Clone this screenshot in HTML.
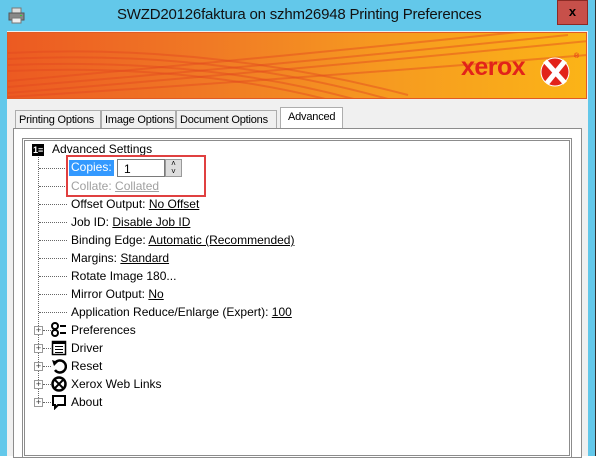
<!DOCTYPE html>
<html><head><style>
*{margin:0;padding:0;box-sizing:border-box}
body{width:600px;height:456px;overflow:hidden;background:#fff;font-family:"Liberation Sans",sans-serif;font-size:12px;position:relative}
.frame{position:absolute;left:0;top:0;width:596px;height:456px;background:#63c8ea;border-right:1px solid #333}
.title{position:absolute;left:117px;top:6px;width:361px;text-align:center;font-size:15px;color:#111;white-space:nowrap;letter-spacing:-0.2px}
.close{position:absolute;left:557px;top:0;width:31px;height:25px;background:#c7504a;border:1px solid #8a2a25;color:#000;font-weight:bold;font-size:13px;text-align:center;line-height:22px}
.client{position:absolute;left:7px;top:31px;width:581px;height:425px;background:#f0f0f0}
.banner{position:absolute;left:7px;top:32px;width:580px;height:67px;border:1px solid #e05a24;background:linear-gradient(90deg,#ec5a22 0%,#f07a25 35%,#f69a20 65%,#fbb417 100%);overflow:hidden}
.tab{position:absolute;top:110px;height:19px;border:1px solid #adadad;background:#f0f0f0;padding:0 3px;line-height:18px;font-size:11px;letter-spacing:-0.2px;white-space:nowrap;overflow:hidden}
.page{position:absolute;left:13px;top:128px;width:569px;height:330px;background:#fff;border:1px solid #8c8c8c}
.tree{position:absolute;left:22px;top:138px;width:550px;height:320px;border:3px double #8c8c8c}
.row{position:absolute;white-space:nowrap;color:#000}
u{text-decoration:underline}
.dot{position:absolute;border-top:1px dotted #666;height:0}
.vdot{position:absolute;border-left:1px dotted #666;width:0}
.plus{position:absolute;width:9px;height:9px;border:1px solid #999;background:#fff;font-size:9px;line-height:7px;text-align:center;color:#333}
</style></head><body>
<div class="frame"></div>
<svg style="position:absolute;left:8px;top:7px" width="18" height="18" viewBox="0 0 18 18"><rect x="4" y="1" width="9" height="5" fill="#ddd" stroke="#777"/><rect x="1" y="6" width="15" height="7" fill="#888" stroke="#555"/><rect x="4" y="11" width="9" height="5" fill="#eee" stroke="#777"/><rect x="12" y="8" width="2" height="1" fill="#3c3"/></svg>
<div class="title">SWZD20126faktura on szhm26948 Printing Preferences</div>
<div class="close">x</div>
<div class="client"></div>
<div class="banner">
<svg width="580" height="67" style="position:absolute;left:0;top:0">
<g fill="none" stroke="#e2461f" stroke-opacity="0.45" stroke-width="2">
<path d="M0 20 Q200 10 400 62"/><path d="M0 26 Q200 16 380 66"/><path d="M0 32 Q200 24 360 70"/><path d="M0 38 Q190 30 340 72"/>
<path d="M0 60 Q250 40 580 8"/><path d="M0 54 Q250 34 560 2"/><path d="M0 48 Q230 28 520 -2"/><path d="M0 64 Q260 48 580 22"/>
</g></svg>
<div style="position:absolute;left:453px;top:20px;font-size:25px;font-weight:bold;color:#e2231a;letter-spacing:-0.5px">xerox</div>
<svg style="position:absolute;left:530px;top:22px" width="34" height="34" viewBox="0 0 32 34"><circle cx="16" cy="17" r="14" fill="#e2231a"/><path d="M6 6 L26 28 M26 6 L8 28" stroke="#fff" stroke-width="5"/><circle cx="16" cy="17" r="14" fill="none" stroke="#fff" stroke-width="1"/></svg>
<div style="position:absolute;left:566px;top:20px;font-size:7px;color:#e2231a">®</div>
</div>
<div class="tab" style="left:15px;width:86px">Printing Options</div>
<div class="tab" style="left:101px;width:75px">Image Options</div>
<div class="tab" style="left:182px;width:95px;left:176px;width:101px">Document Options</div>
<div class="tab" style="left:280px;top:107px;height:22px;width:63px;background:#fff;border-bottom:none;padding-left:7px">Advanced</div>
<div class="page"></div>
<div class="tree"></div>
<div style="position:absolute;left:32px;top:144px;width:12px;height:12px;background:#000;color:#fff;font-size:9px;font-weight:bold;line-height:12px;padding-left:1px">1&#8801;</div>
<div class="row" style="left:52px;top:142px">Advanced Settings</div>
<div class="vdot" style="left:38px;top:157px;height:245px"></div>
<div class="dot" style="left:39px;top:168px;width:28px"></div>
<div class="dot" style="left:39px;top:186px;width:28px"></div>
<div class="dot" style="left:39px;top:204px;width:28px"></div>
<div class="dot" style="left:39px;top:222px;width:28px"></div>
<div class="dot" style="left:39px;top:240px;width:28px"></div>
<div class="dot" style="left:39px;top:258px;width:28px"></div>
<div class="dot" style="left:39px;top:276px;width:28px"></div>
<div class="dot" style="left:39px;top:294px;width:28px"></div>
<div class="dot" style="left:39px;top:312px;width:28px"></div>
<div style="position:absolute;left:69px;top:160px;width:45px;height:16px;background:#3399ff"></div>
<div class="row" style="left:71px;top:160px;color:#fff">Copies:</div>
<div style="position:absolute;left:117px;top:159px;width:48px;height:18px;border:1px solid #7a7a7a;background:#fff;padding:2px 0 0 6px">1</div>
<div style="position:absolute;left:165px;top:159px;width:17px;height:18px;background:#ddd;border:1px solid #999;font-size:8px;line-height:8px;text-align:center">&#708;<br>&#709;</div>
<div style="position:absolute;left:66px;top:155px;width:140px;height:42px;border:2px solid #e04040"></div>
<div class="row" style="left:71px;top:179px;color:#a0a0a0">Collate: <u>Collated</u></div>
<div class="row" style="left:71px;top:197px">Offset Output: <u>No Offset</u></div>
<div class="row" style="left:71px;top:215px">Job ID: <u>Disable Job ID</u></div>
<div class="row" style="left:71px;top:233px">Binding Edge: <u>Automatic (Recommended)</u></div>
<div class="row" style="left:71px;top:251px">Margins: <u>Standard</u></div>
<div class="row" style="left:71px;top:269px">Rotate Image 180...</div>
<div class="row" style="left:71px;top:287px">Mirror Output: <u>No</u></div>
<div class="row" style="left:71px;top:305px">Application Reduce/Enlarge (Expert): <u>100</u></div>
<div class="plus" style="left:34px;top:326px">+</div><div class="dot" style="left:43px;top:330px;width:8px"></div>
<div class="plus" style="left:34px;top:344px">+</div><div class="dot" style="left:43px;top:348px;width:8px"></div>
<div class="plus" style="left:34px;top:362px">+</div><div class="dot" style="left:43px;top:366px;width:8px"></div>
<div class="plus" style="left:34px;top:380px">+</div><div class="dot" style="left:43px;top:384px;width:8px"></div>
<div class="plus" style="left:34px;top:398px">+</div><div class="dot" style="left:43px;top:402px;width:8px"></div>
<svg style="position:absolute;left:51px;top:322px" width="16" height="16"><circle cx="4" cy="4" r="3" fill="none" stroke="#000" stroke-width="2"/><circle cx="4" cy="11" r="3" fill="none" stroke="#000" stroke-width="2"/><rect x="9" y="3" width="6" height="2"/><rect x="9" y="10" width="6" height="2"/></svg>
<div class="row" style="left:71px;top:323px">Preferences</div>
<svg style="position:absolute;left:51px;top:340px" width="16" height="16"><rect x="1.5" y="1.5" width="13" height="13" fill="#fff" stroke="#000" stroke-width="1.5"/><rect x="1" y="1" width="14" height="3"/><rect x="4" y="6" width="8" height="1"/><rect x="4" y="9" width="8" height="1"/><rect x="4" y="12" width="8" height="1"/></svg>
<div class="row" style="left:71px;top:341px">Driver</div>
<svg style="position:absolute;left:51px;top:358px" width="16" height="16"><path d="M4 5 A6 6 0 1 1 4 12" fill="none" stroke="#000" stroke-width="2.5"/><path d="M1 2 L7 4 L3 8Z"/></svg>
<div class="row" style="left:71px;top:359px">Reset</div>
<svg style="position:absolute;left:51px;top:376px" width="16" height="16"><circle cx="8" cy="8" r="6.5" fill="none" stroke="#000" stroke-width="2.5"/><path d="M4 4 L12 12 M12 4 L4 12" stroke="#000" stroke-width="2"/></svg>
<div class="row" style="left:71px;top:377px">Xerox Web Links</div>
<svg style="position:absolute;left:51px;top:394px" width="16" height="16"><path d="M2 2 H14 V11 H7 L4 14 V11 H2Z" fill="none" stroke="#000" stroke-width="2"/></svg>
<div class="row" style="left:71px;top:395px">About</div>
</body></html>
